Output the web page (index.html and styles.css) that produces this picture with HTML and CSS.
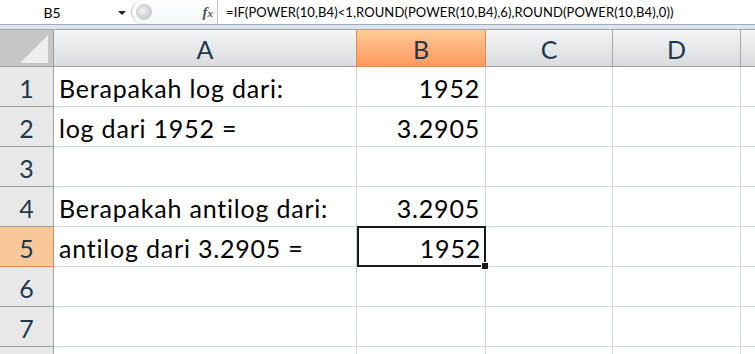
FILE: index.html
```html
<!DOCTYPE html>
<html>
<head>
<meta charset="utf-8">
<link rel="stylesheet" href="styles.css">
</head>
<body>
<div class="app">
  <div class="formula-bar">
    <div class="name-box"><span class="name">B5</span><span class="caret"></span></div>
    <div class="fx-area">
      <span class="knob"></span>
      <span class="fx"><i>f</i><i class="x">x</i></span>
    </div>
    <div class="formula">=IF(POWER(10,B4)&lt;1,ROUND(POWER(10,B4),6),ROUND(POWER(10,B4),0))</div>
  </div>
  <div class="band"></div>
  <div class="sheet">
    <div class="corner">
      <svg width="52" height="36" viewBox="0 0 52 36"><polygon points="20,33 48,33 48,5" fill="#efefef"/></svg>
    </div>
    <div class="colhead">A</div>
    <div class="colhead sel">B</div>
    <div class="colhead">C</div>
    <div class="colhead">D</div>
    <div class="colhead last"></div>

    <div class="rowhead">1</div>
    <div class="cell">Berapakah log dari:</div>
    <div class="cell num">1952</div>
    <div class="cell"></div><div class="cell"></div><div class="cell last"></div>

    <div class="rowhead">2</div>
    <div class="cell">log dari 1952 =</div>
    <div class="cell num">3.2905</div>
    <div class="cell"></div><div class="cell"></div><div class="cell last"></div>

    <div class="rowhead">3</div>
    <div class="cell"></div>
    <div class="cell num"></div>
    <div class="cell"></div><div class="cell"></div><div class="cell last"></div>

    <div class="rowhead">4</div>
    <div class="cell">Berapakah antilog dari:</div>
    <div class="cell num">3.2905</div>
    <div class="cell"></div><div class="cell"></div><div class="cell last"></div>

    <div class="rowhead sel">5</div>
    <div class="cell">antilog dari 3.2905 =</div>
    <div class="cell num active">1952<span class="handle"></span></div>
    <div class="cell"></div><div class="cell"></div><div class="cell last"></div>

    <div class="rowhead">6</div>
    <div class="cell"></div>
    <div class="cell num"></div>
    <div class="cell"></div><div class="cell"></div><div class="cell last"></div>

    <div class="rowhead">7</div>
    <div class="cell"></div>
    <div class="cell num"></div>
    <div class="cell"></div><div class="cell"></div><div class="cell last"></div>

    <div class="rowhead"></div>
    <div class="cell"></div>
    <div class="cell num"></div>
    <div class="cell"></div><div class="cell"></div><div class="cell last"></div>
  </div>
</div>
</body>
</html>
```

FILE: styles.css
```css
html, body {
  margin: 0;
  padding: 0;
  background: #ffffff;
  overflow: hidden;
}
.app {
  width: 755px;
  height: 354px;
  overflow: hidden;
  font-family: Lato, "Liberation Sans", sans-serif;
}
.formula-bar {
  display: flex;
  height: 24px;
  border-bottom: 1px solid #a5acb5;
  background: #ffffff;
}
.name-box {
  width: 131px;
  display: flex;
  align-items: center;
  font-size: 14px;
  color: #000;
}
.name {
  flex: 1;
  text-align: center;
  padding-right: 14px;
}
.caret {
  width: 0;
  height: 0;
  border-left: 4px solid transparent;
  border-right: 4px solid transparent;
  border-top: 4px solid #222;
  margin-right: 5px;
  margin-top: 2px;
}
.fx-area {
  width: 86px;
  border-left: 1px solid #b9c0c9;
  border-radius: 12px 0 0 12px;
  display: flex;
  align-items: center;
  justify-content: space-between;
  padding: 0 4px 0 4px;
  box-sizing: border-box;
  background: linear-gradient(#ffffff, #f4f6f8);
}
.knob {
  width: 14px;
  height: 14px;
  border-radius: 50%;
  background: radial-gradient(circle at 40% 40%, #f2f2f2, #b8bcc2);
  border: 1px solid #c8ccd2;
}
.fx {
  font-family: "Liberation Serif", serif;
  font-size: 15px;
  color: #555;
  font-weight: bold;
}
.fx .x {
  font-size: 11px;
}
.formula {
  flex: 1;
  padding-left: 8px;
  font-size: 13px;
  letter-spacing: 0.1px;
  line-height: 24px;
  color: #000;
  white-space: nowrap;
  border-left: 1px solid #c2c8d0;
}
.band {
  height: 4px;
  background: #dde4ee;
  border-bottom: 1px solid #9fa5ad;
}
.sheet {
  display: grid;
  grid-template-columns: 54px 303px 129px 127px 128px 1fr;
  grid-template-rows: 37px repeat(8, 40px);
}
.corner {
  background: #c6c6c6;
  border-right: 1px solid #9e9e9e;
  border-bottom: 1px solid #9e9e9e;
  box-sizing: border-box;
  display: flex;
  align-items: flex-start;
}
.colhead {
  box-sizing: border-box;
  background: linear-gradient(#f4f5f6, #e6e8ea 50%, #d9dbde);
  border-right: 1px solid #a4a8ad;
  border-bottom: 1px solid #9e9e9e;
  display: flex;
  align-items: center;
  justify-content: center;
  font-size: 25px;
  color: #20384c;
  padding-top: 2px;
}
.colhead.sel {
  background: linear-gradient(#ffcd98, #ffb07a 50%, #ff9a5e);
  border-right: 1px solid #e38a4e;
  border-left: 1px solid #e38a4e;
  margin-left: -1px;
  border-bottom: 1px solid #e38a4e;
}
.colhead.last {
  border-right: none;
}
.rowhead {
  box-sizing: border-box;
  background: #e8e8e8;
  border-right: 1px solid #9e9e9e;
  border-bottom: 1px solid #9e9e9e;
  display: flex;
  align-items: center;
  justify-content: center;
  font-size: 25px;
  color: #20384c;
  padding-top: 2px;
}
.rowhead.sel {
  background: #f8c89a;
  border-bottom: 1px solid #e38a4e;
  border-right: 1px solid #e38a4e;
}
.cell {
  box-sizing: border-box;
  border-right: 1px solid #d0d7e5;
  border-bottom: 1px solid #d0d7e5;
  font-size: 25px;
  letter-spacing: 0.8px;
  color: #000;
  display: flex;
  align-items: center;
  padding: 3px 5px 0 5px;
  white-space: nowrap;
  position: relative;
}
.cell.num {
  justify-content: flex-end;
}
.cell.last {
  border-right: none;
}
.cell.active {
  border: 2px solid #1a1a1a;
  margin: -1px 0 0 0;
  padding-right: 3px;
  z-index: 2;
}
.handle {
  position: absolute;
  right: -5px;
  bottom: -5px;
  width: 6px;
  height: 6px;
  background: #1a1a1a;
  border: 1px solid #fff;
  z-index: 3;
}
```
